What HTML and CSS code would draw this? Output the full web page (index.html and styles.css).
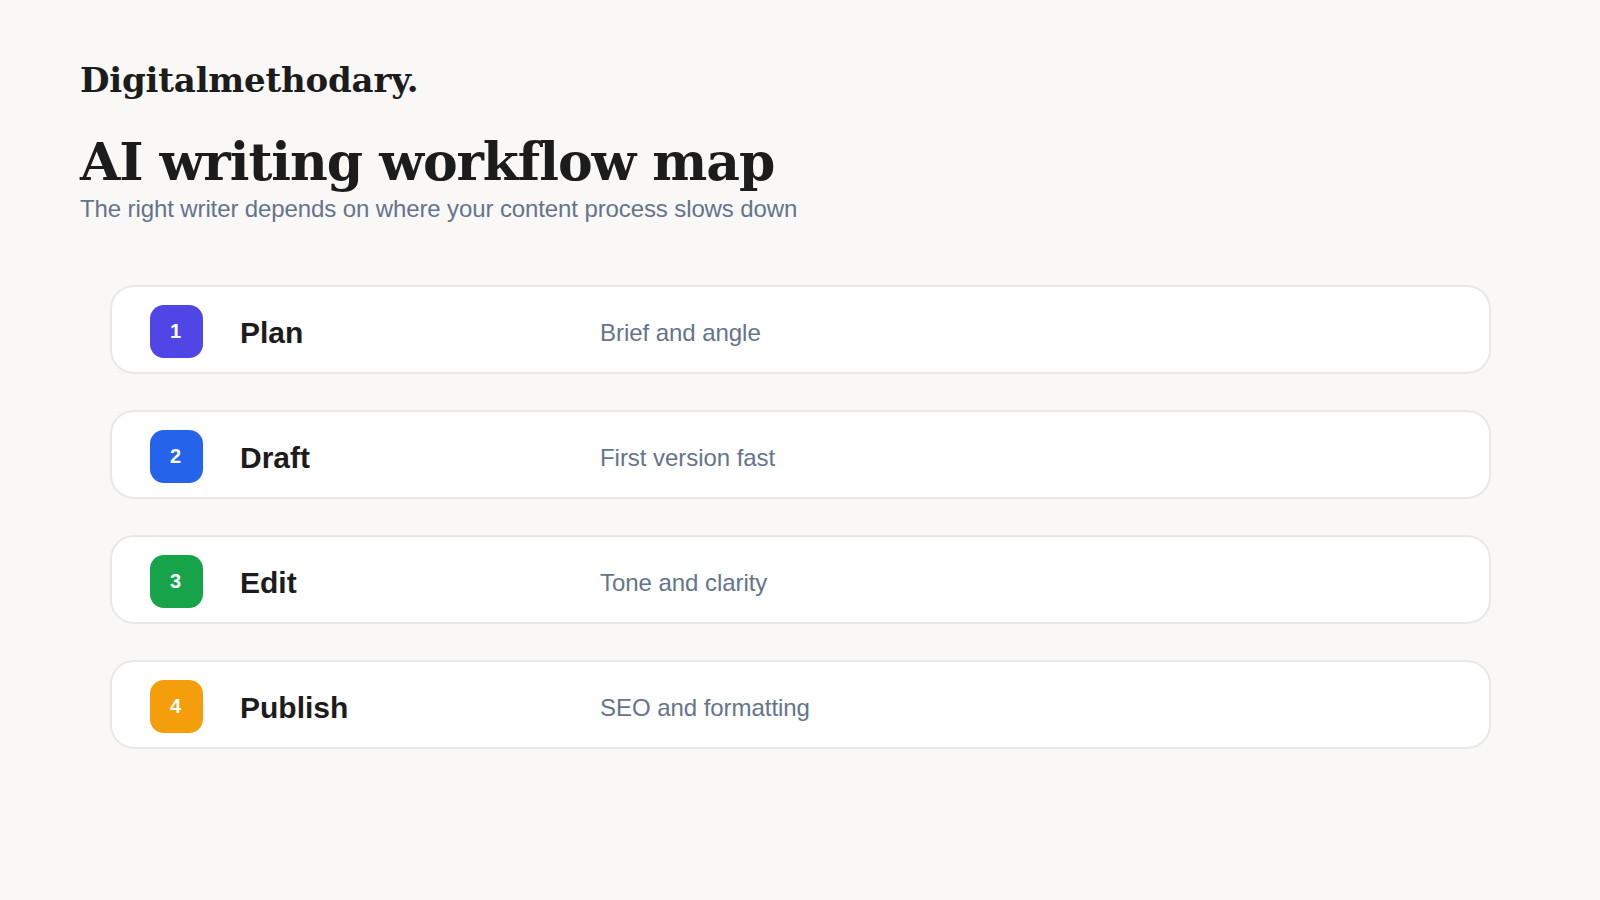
FILE: index.html
```html
<!DOCTYPE html>
<html lang="en">
<head>
<meta charset="utf-8">
<title>AI writing workflow map</title>
<link rel="stylesheet" href="styles.css">
</head>
<body>
<main class="slide">
  <header class="head">
    <div class="brand">Digitalmethodary.</div>
    <h1 class="title">AI writing workflow map</h1>
    <p class="sub">The right writer depends on where your content process slows down</p>
  </header>
  <ol class="steps">
    <li class="step"><span class="num c1">1</span><span class="name">Plan</span><span class="desc">Brief and angle</span></li>
    <li class="step"><span class="num c2">2</span><span class="name">Draft</span><span class="desc">First version fast</span></li>
    <li class="step"><span class="num c3">3</span><span class="name">Edit</span><span class="desc">Tone and clarity</span></li>
    <li class="step"><span class="num c4">4</span><span class="name">Publish</span><span class="desc">SEO and formatting</span></li>
  </ol>
</main>
</body>
</html>
```
FILE: styles.css
```css
* { box-sizing: border-box; }
html, body { margin: 0; height: 100%; }
body { background: #f9f8f6; color: #1c1c1c; font-family: "Liberation Sans", Arial, sans-serif; }
.slide { width: 1600px; height: 900px; padding: 58px 109px 0 80px; overflow: hidden; }
.brand { font-family: "DejaVu Serif", serif; font-weight: 700; font-size: 34px; line-height: 44px; letter-spacing: -0.2px; }
.title { margin: 27px 0 0; font-family: "DejaVu Serif", serif; font-weight: 700; font-size: 52px; line-height: 66px; letter-spacing: -1.05px; }
.sub { margin: 0; font-size: 24px; line-height: 28px; letter-spacing: -0.11px; color: #64748b; }
.steps { list-style: none; margin: 62px 0 0 30px; padding: 0; display: flex; flex-direction: column; gap: 36px; }
.step { height: 89px; display: flex; align-items: center; padding: 3px 0 0 38px; background: #fff; border: 2px solid #e8e8ea; border-radius: 24px; }
.num { width: 53px; height: 53px; flex: none; display: flex; align-items: center; justify-content: center; padding: 0 2px 0 0; border-radius: 14px; color: #fff; font-weight: 700; font-size: 20px; }
.c1 { background: #4f46e5; }
.c2 { background: #2563eb; }
.c3 { background: #16a34a; }
.c4 { background: #f59e0b; }
.name { width: 360px; margin-left: 37px; padding-top: 4px; font-weight: 700; font-size: 30px; }
.desc { padding-top: 4px; font-size: 24px; letter-spacing: -0.05px; color: #64748b; }
```
